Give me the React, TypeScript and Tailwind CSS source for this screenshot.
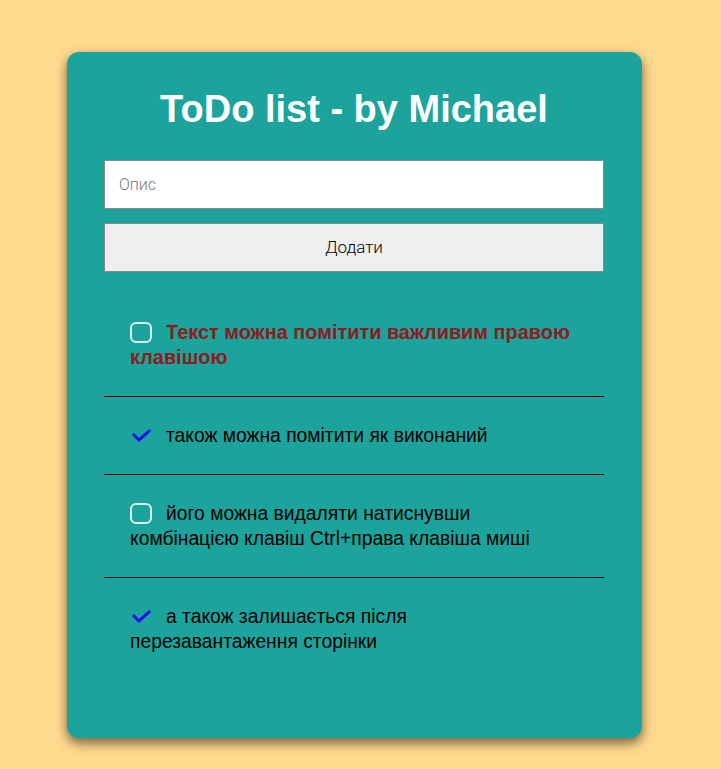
import React from 'react'

type Todo = { text: string; done: boolean; important: boolean }

const todos: Todo[] = [
  { text: 'Текст можна помітити важливим правою клавішою', done: false, important: true },
  { text: 'також можна помітити як виконаний', done: true, important: false },
  { text: 'його можна видаляти натиснувши комбінацією клавіш Ctrl+права клавіша миші', done: false, important: false },
  { text: 'а також залишається після перезавантаження сторінки', done: true, important: false },
]

const Check = () => (
  <svg width="22" height="16" viewBox="0 0 22 16" className="inline-block align-[-1px] mr-[14px]">
    <path d="M4 8 L9 13 L19 4" fill="none" stroke="#0a10f0" strokeWidth="3" strokeLinecap="square" />
  </svg>
)

const Box = () => (
  <span className="inline-block w-[22px] h-[21px] border-2 border-[#d7f0ee] rounded-[6px] align-[-4px] mr-[14px]" />
)

export default function App() {
  return (
    <div className="min-h-screen w-full bg-[#ffd98e] pt-[52px] pb-[31px] font-['Liberation_Sans',Arial,sans-serif]">
      <div className="ml-[67px] w-[575px] h-[686px] bg-[#1ca39b] rounded-[12px] shadow-[0_5px_12px_rgba(0,0,0,0.55)] pl-[37px] pr-[38px] pt-[35px]">
        <h1 className="text-white text-[38px] font-bold leading-[44px] text-center">ToDo list - by Michael</h1>
        <input
          placeholder="Опис"
          className="mt-[29px] block w-full h-[49px] bg-white border border-[#888] px-[14px] text-[16px] font-['Roboto',sans-serif] font-light placeholder:text-[#777] outline-none"
        />
        <button className="mt-[14px] block w-full h-[49px] bg-[#efefef] border border-[#888] text-[17px] text-black font-['Roboto',sans-serif] font-light">
          Додати
        </button>
        <ul className="mt-[22px]">
          {todos.map((t, i) => (
            <li
              key={i}
              className={`pl-[26px] pr-[30px] py-[26px] leading-[25px] ${
                i < todos.length - 1 ? 'border-b border-black' : ''
              } ${t.important ? 'font-bold text-[19.9px] text-[#8f1a1f]' : 'text-[19.3px] text-black'}`}
            >
              {t.done ? <Check /> : <Box />}
              {t.text}
            </li>
          ))}
        </ul>
      </div>
    </div>
  )
}
